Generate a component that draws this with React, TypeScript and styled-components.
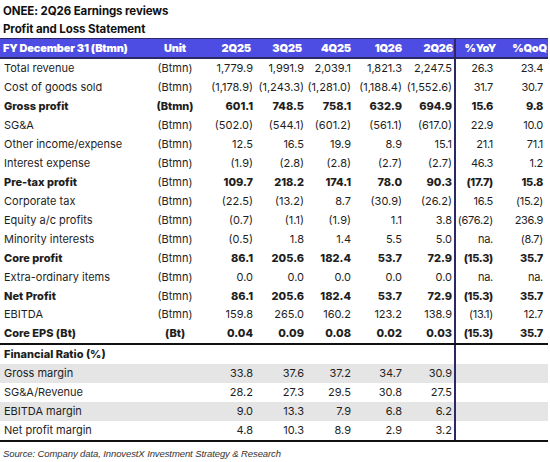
import styled, { createGlobalStyle } from "styled-components";

type PnlRow = {
  label: string;
  unit: string;
  values: string[];
  yoy: string;
  qoq: string;
  bold?: boolean;
  boldUnit?: boolean;
};

type RatioRow = { label: string; values: string[]; shaded?: boolean };

const QUARTERS = ["2Q25", "3Q25", "4Q25", "1Q26", "2Q26"];
const NUM_PAD = [0, 0, 0, 1, 2];
const HEAD_PAD = [2, 2, 0, 1, 1];

const PNL_ROWS: PnlRow[] = [
  { label: "Total revenue", unit: "(Btmn)", values: ["1,779.9", "1,991.9", "2,039.1", "1,821.3", "2,247.5"], yoy: "26.3", qoq: "23.4" },
  { label: "Cost of goods sold", unit: "(Btmn)", values: ["(1,178.9)", "(1,243.3)", "(1,281.0)", "(1,188.4)", "(1,552.6)"], yoy: "31.7", qoq: "30.7" },
  { label: "Gross profit", unit: "(Btmn)", values: ["601.1", "748.5", "758.1", "632.9", "694.9"], yoy: "15.6", qoq: "9.8", bold: true, boldUnit: true },
  { label: "SG&A", unit: "(Btmn)", values: ["(502.0)", "(544.1)", "(601.2)", "(561.1)", "(617.0)"], yoy: "22.9", qoq: "10.0" },
  { label: "Other income/expense", unit: "(Btmn)", values: ["12.5", "16.5", "19.9", "8.9", "15.1"], yoy: "21.1", qoq: "71.1" },
  { label: "Interest expense", unit: "(Btmn)", values: ["(1.9)", "(2.8)", "(2.8)", "(2.7)", "(2.7)"], yoy: "46.3", qoq: "1.2" },
  { label: "Pre-tax profit", unit: "(Btmn)", values: ["109.7", "218.2", "174.1", "78.0", "90.3"], yoy: "(17.7)", qoq: "15.8", bold: true },
  { label: "Corporate tax", unit: "(Btmn)", values: ["(22.5)", "(13.2)", "8.7", "(30.9)", "(26.2)"], yoy: "16.5", qoq: "(15.2)" },
  { label: "Equity a/c profits", unit: "(Btmn)", values: ["(0.7)", "(1.1)", "(1.9)", "1.1", "3.8"], yoy: "(676.2)", qoq: "236.9" },
  { label: "Minority interests", unit: "(Btmn)", values: ["(0.5)", "1.8", "1.4", "5.5", "5.0"], yoy: "na.", qoq: "(8.7)" },
  { label: "Core profit", unit: "(Btmn)", values: ["86.1", "205.6", "182.4", "53.7", "72.9"], yoy: "(15.3)", qoq: "35.7", bold: true },
  { label: "Extra-ordinary items", unit: "(Btmn)", values: ["0.0", "0.0", "0.0", "0.0", "0.0"], yoy: "na.", qoq: "na." },
  { label: "Net Profit", unit: "(Btmn)", values: ["86.1", "205.6", "182.4", "53.7", "72.9"], yoy: "(15.3)", qoq: "35.7", bold: true },
  { label: "EBITDA", unit: "(Btmn)", values: ["159.8", "265.0", "160.2", "123.2", "138.9"], yoy: "(13.1)", qoq: "12.7" },
  { label: "Core EPS (Bt)", unit: "(Bt)", values: ["0.04", "0.09", "0.08", "0.02", "0.03"], yoy: "(15.3)", qoq: "35.7", bold: true, boldUnit: true },
];

const RATIO_ROWS: RatioRow[] = [
  { label: "Gross margin", values: ["33.8", "37.6", "37.2", "34.7", "30.9"], shaded: true },
  { label: "SG&A/Revenue", values: ["28.2", "27.3", "29.5", "30.8", "27.5"] },
  { label: "EBITDA margin", values: ["9.0", "13.3", "7.9", "6.8", "6.2"], shaded: true },
  { label: "Net profit margin", values: ["4.8", "10.3", "8.9", "2.9", "3.2"] },
];

const GlobalStyle = createGlobalStyle`
  html, body {
    margin: 0;
    padding: 0;
    background: #ffffff;
  }
  body {
    font-family: Inter, "Liberation Sans", sans-serif;
    color: #1e1e1e;
  }
`;

export default function App() {
  return (
    <>
      <GlobalStyle />
      <Page>
        <Titles>
          <Title>ONEE: 2Q26 Earnings reviews</Title>
          <Title>Profit and Loss Statement</Title>
        </Titles>

        <HeaderRow>
          <HeadCell>FY December 31 (Btmn)</HeadCell>
          <HeadCell $align="center">Unit</HeadCell>
          {QUARTERS.map((q, i) => (
            <HeadCell key={q} $align="right" $pad={HEAD_PAD[i]}>
              {q}
            </HeadCell>
          ))}
          <HeadCell $align="right" $pad={0} $divider>
            %YoY
          </HeadCell>
          <HeadCell $align="right" $pad={1}>
            %QoQ
          </HeadCell>
        </HeaderRow>

        <PnlBlock>
          {PNL_ROWS.map(row => (
            <Row key={row.label} $height={18.93}>
              <Label $bold={row.bold}>{row.label}</Label>
              <Unit $bold={row.boldUnit}>{row.unit}</Unit>
              {row.values.map((v, i) => (
                <Num key={i} $bold={row.bold} $pad={NUM_PAD[i]}>
                  {v}
                </Num>
              ))}
              <Pct $bold={row.bold} $pad={3} $divider>
                {row.yoy}
              </Pct>
              <Pct $bold={row.bold} $pad={5}>
                {row.qoq}
              </Pct>
            </Row>
          ))}
        </PnlBlock>

        <RatioBlock>
          <Row $height={19}>
            <SectionLabel>Financial Ratio (%)</SectionLabel>
            <Num $pad={0} />
            {QUARTERS.map(q => (
              <Num key={q} $pad={0} />
            ))}
            <Pct $pad={3} $divider />
            <Pct $pad={5} />
          </Row>
          {RATIO_ROWS.map(row => (
            <Row key={row.label} $height={19} $shaded={row.shaded}>
              <Label>{row.label}</Label>
              <Unit />
              {row.values.map((v, i) => (
                <Num key={i} $pad={NUM_PAD[i]}>
                  {v}
                </Num>
              ))}
              <Pct $pad={3} $divider />
              <Pct $pad={5} />
            </Row>
          ))}
        </RatioBlock>

        <Source>Source: Company data, InnovestX Investment Strategy &amp; Research</Source>
      </Page>
    </>
  );
}

const COLUMNS = "150px 50px 53px 51px 47px 52px 51px 42px 52px";
const NAVY = "#2c2866";

const Page = styled.div`
  width: 550px;
  height: 462px;
  overflow: hidden;
`;

const Titles = styled.div`
  padding: 2px 0 0 3px;
  height: 36px;
`;

const Title = styled.div`
  font-size: 11.5px;
  font-weight: 700;
  line-height: 18px;
  color: #111111;
  letter-spacing: -0.1px;
`;

const HeaderRow = styled.div`
  display: grid;
  grid-template-columns: ${COLUMNS};
  width: 548px;
  height: 21px;
  box-sizing: border-box;
  background: #4d4de3;
  border-top: 1px solid ${NAVY};
  border-bottom: 2px solid ${NAVY};
`;

const HeadCell = styled.div<{ $align?: "center" | "right"; $pad?: number; $divider?: boolean }>`
  display: flex;
  align-items: center;
  justify-content: ${p => (p.$align === "center" ? "center" : p.$align === "right" ? "flex-end" : "flex-start")};
  padding-left: ${p => (p.$align ? 0 : 3)}px;
  padding-right: ${p => p.$pad ?? 0}px;
  color: #ffffff;
  font-size: 11px;
  font-weight: 900;
  letter-spacing: -0.2px;
  white-space: nowrap;
  border-left: ${p => (p.$divider ? `2px solid ${NAVY}` : "none")};
`;

const PnlBlock = styled.div`
  width: 548px;
  border-bottom: 2px solid #111111;
`;

const RatioBlock = styled.div`
  width: 548px;
  border-bottom: 2px solid #111111;
`;

const Row = styled.div<{ $height: number; $shaded?: boolean }>`
  display: grid;
  grid-template-columns: ${COLUMNS};
  height: ${p => p.$height}px;
  background: ${p => (p.$shaded ? "#e5e5e5" : "transparent")};
  font-size: 11px;
`;

const Label = styled.div<{ $bold?: boolean }>`
  display: flex;
  align-items: center;
  padding-left: 4px;
  white-space: nowrap;
  font-weight: ${p => (p.$bold ? 800 : 400)};
`;

const SectionLabel = styled(Label)`
  font-weight: 800;
`;

const Unit = styled.div<{ $bold?: boolean }>`
  display: flex;
  align-items: center;
  justify-content: center;
  font-weight: ${p => (p.$bold ? 800 : 400)};
`;

const Num = styled.div<{ $bold?: boolean; $pad: number; $divider?: boolean }>`
  display: flex;
  align-items: center;
  justify-content: flex-end;
  padding-right: ${p => p.$pad}px;
  white-space: nowrap;
  font-weight: ${p => (p.$bold ? 800 : 400)};
  border-left: ${p => (p.$divider ? `2px solid ${NAVY}` : "none")};
`;

const Pct = styled(Num)`
  letter-spacing: -0.3px;
`;

const Source = styled.div`
  margin: 6px 0 0 3px;
  font-family: "Liberation Sans", Arial, sans-serif;
  font-style: italic;
  font-size: 9.5px;
  letter-spacing: -0.1px;
  color: #333333;
`;
